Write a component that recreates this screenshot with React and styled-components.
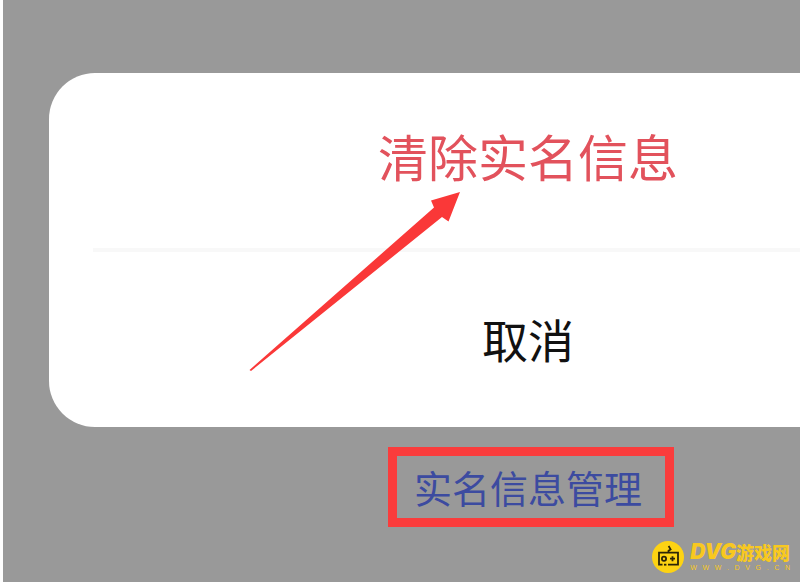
import React from 'react';
import styled, { createGlobalStyle } from 'styled-components';

const GlobalStyle = createGlobalStyle`
  body {
    margin: 0;
    background-color: #999999;
    font-family: 'Noto Sans CJK SC', 'Noto Sans', sans-serif;
  }
`;

const Screen = styled.main`
  position: relative;
  box-sizing: border-box;
  min-height: 100vh;
  overflow: hidden;
  border-left: 3px solid #fdfdfd;
`;

/* the sheet runs past the right edge of the window */
const Stage = styled.div`
  display: flex;
  flex-direction: column;
  align-items: center;
  gap: 20px;
  margin-right: -256px;
  padding: 73px 49px 0 46px;
`;

const Sheet = styled.section`
  position: relative;
  align-self: stretch;
  padding: 0 44px;
  border-radius: 46px;
  background-color: #ffffff;
`;

const SheetButton = styled.button`
  display: block;
  width: 100%;
  height: 175px;
  padding: ${props => (props.$danger ? '0 0 12px' : '0 0 4px')};
  border: 0;
  background: none;
  color: ${props => (props.$danger ? '#e2525c' : '#111111')};
  font-family: inherit;
  font-size: ${props => (props.$danger ? 50 : 46)}px;
  line-height: 64px;
`;

const Divider = styled.hr`
  height: 4px;
  margin: 0;
  border: 0;
  background-color: #f8f8f8;
`;

const Arrow = styled.svg`
  position: absolute;
  top: 117px;
  left: 200px;
  width: 212px;
  height: 182px;
  pointer-events: none;
`;

const ManageLink = styled.a`
  margin-left: 6px;
  padding: 0 23px 0 17px;
  border: 9px solid #fa3c3c;
  color: #3c4ba0;
  font-size: 38px;
  line-height: 62px;
  text-decoration: none;
`;

const Watermark = styled.div`
  position: absolute;
  right: 10px;
  bottom: 9px;
  display: flex;
  align-items: center;
  gap: 6px;
  color: #f8c820;
`;

const WatermarkIcon = styled.svg`
  width: 32px;
  height: 32px;
`;

const WatermarkText = styled.div`
  display: flex;
  flex-direction: column;
`;

const SiteName = styled.div`
  display: flex;
  align-items: center;
  font-size: 18px;
  font-weight: 900;
  line-height: 22px;
`;

const Latin = styled.span`
  font-family: Inter, 'Liberation Sans', sans-serif;
  font-size: 21px;
  font-style: italic;
`;

const SiteUrl = styled.div`
  display: flex;
  justify-content: space-between;
  font-family: 'Liberation Sans', sans-serif;
  font-size: 7px;
  line-height: 10px;
`;

class App extends React.Component {
  render() {
    return (
      <Screen>
        <GlobalStyle />
        <Stage>
          <Sheet>
            <SheetButton type="button" $danger>
              清除实名信息
            </SheetButton>
            <Divider />
            <SheetButton type="button">取消</SheetButton>
            <Arrow viewBox="0 0 212 182" aria-hidden="true">
              <path
                d="M0.5 180 L2 181 L193 27 L199.5 31.5 L211 2 L182 10.5 L185 17.5 Z"
                fill="#fa3838"
              />
            </Arrow>
          </Sheet>
          <ManageLink href="#manage">实名信息管理</ManageLink>
        </Stage>
        <Watermark>
          <WatermarkIcon viewBox="0 0 32 32" aria-hidden="true">
            <circle cx="16" cy="16" r="16" fill="#fdd313" />
            <g fill="none" stroke="#2b2508" strokeWidth="1.8">
              <path d="M10.5 23.7 H7 V11.7 H26 V23.7 H16" />
              <path d="M12 23.7 h2.4" />
              <path d="M16.5 11.5 V9.8 L18.6 8.4 L16.6 5" />
              <circle cx="12" cy="17.7" r="2.1" />
              <path d="M18 17.7 h5 M20.5 15.2 v5" />
            </g>
          </WatermarkIcon>
          <WatermarkText>
            <SiteName>
              <Latin>DVG</Latin>游戏网
            </SiteName>
            <SiteUrl>
              {[...'WWW.DVG.CN'].map((letter, index) => (
                <span key={index}>{letter}</span>
              ))}
            </SiteUrl>
          </WatermarkText>
        </Watermark>
      </Screen>
    );
  }
}

export default App;
